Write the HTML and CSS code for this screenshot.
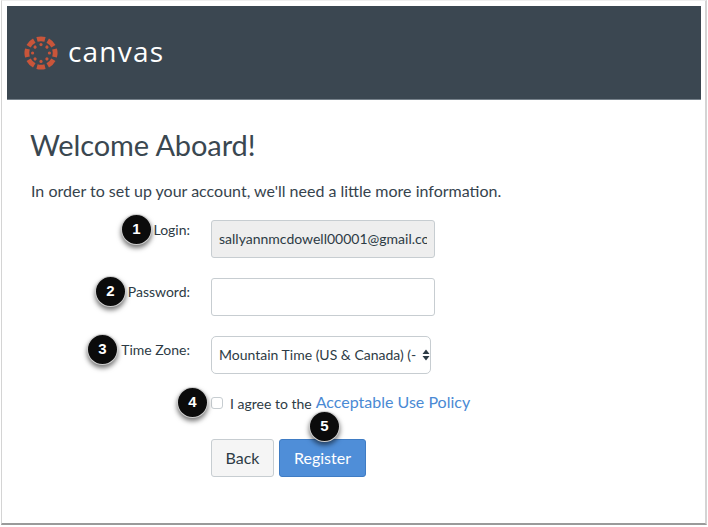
FILE: index.html
```html
<!DOCTYPE html>
<html lang="en">
<head>
    <meta charset="UTF-8">
    <title>Welcome Aboard</title>
    <link rel="stylesheet" href="styles.css">
</head>
<body>
    <div class="frame">
        <div class="header">
            <svg class="logo" viewBox="-17 -17 34 34" width="34" height="34">
                <g fill="#c9553a">
                    <g id="seg">
                        <path d="M-4.6 -15.9 A16.5 16.5 0 0 1 4.6 -15.9 L3.4 -11.2 A11.7 11.7 0 0 0 -3.4 -11.2 Z"/>
                        <circle cx="0" cy="-8.4" r="1.6"/>
                    </g>
                    <use href="#seg" transform="rotate(45)"/>
                    <use href="#seg" transform="rotate(90)"/>
                    <use href="#seg" transform="rotate(135)"/>
                    <use href="#seg" transform="rotate(180)"/>
                    <use href="#seg" transform="rotate(225)"/>
                    <use href="#seg" transform="rotate(270)"/>
                    <use href="#seg" transform="rotate(315)"/>
                </g>
            </svg>
            <div class="brand">canvas</div>
        </div>

        <div class="content">
            <h1 class="title">Welcome Aboard!</h1>
            <p class="intro">In order to set up your account, we'll need a little more information.</p>

            <div class="form">
                <div class="row row-login">
                    <div class="label"><span class="step">1</span>Login:</div>
                    <input class="field field-locked" type="text" value="sallyannmcdowell00001@gmail.com" readonly>
                </div>
                <div class="row row-password">
                    <div class="label"><span class="step">2</span>Password:</div>
                    <input class="field" type="password">
                </div>
                <div class="row row-zone">
                    <div class="label"><span class="step">3</span>Time Zone:</div>
                    <div class="select">
                        <span class="select-text">Mountain Time (US &amp; Canada) (-</span>
                        <svg class="select-arrows" viewBox="0 0 8 12" width="8" height="12">
                            <path d="M4 0.5 L7.5 5 H0.5 Z M4 11.5 L0.5 7 H7.5 Z" fill="#2d3b45"/>
                        </svg>
                    </div>
                </div>
                <div class="row row-agree">
                    <div class="label"><span class="step">4</span></div>
                    <div class="agree">
                        <span class="checkbox"></span>
                        <span class="agree-text">I agree to the</span>
                        <a class="policy" href="#">Acceptable Use Policy</a>
                    </div>
                </div>
                <div class="row row-actions">
                    <div class="label"></div>
                    <div class="actions">
                        <button class="btn btn-back">Back</button>
                        <button class="btn btn-primary">Register<span class="step step-over">5</span></button>
                    </div>
                </div>
            </div>
        </div>
    </div>
</body>
</html>
```

FILE: styles.css
```css
* { margin: 0; padding: 0; box-sizing: border-box; }
html, body { width: 708px; height: 527px; overflow: hidden; }
body {
    background: #fff;
    font-family: Lato, "Open Sans", sans-serif;
    color: #2d3b45;
    padding: 0 1px;
}
.frame {
    height: 525px;
    border: 1px solid #d4d4d4;
    border-top-color: #eeeeee;
    border-right-width: 2px;
    border-bottom: 2px solid #9a9a9a;
    padding: 5px 4px 0 5px;
}
.header {
    height: 94px;
    background: #3b4751;
    border-bottom: 1px solid #76818a;
    display: flex;
    align-items: center;
    padding: 0 0 0 17px;
}
.logo { display: block; margin-top: 1px; }
.brand {
    color: #fff;
    font-family: "Open Sans", sans-serif;
    font-size: 28px;
    font-weight: 500;
    letter-spacing: 1.2px;
    margin-left: 10px;
    margin-top: -3px;
}
.content { padding: 26px 24px 0; }
.title { font-size: 29px; font-weight: 400; line-height: 38px; letter-spacing: -0.1px; color: #3a4750; margin-left: -1px; }
.intro { font-size: 16px; line-height: 24px; margin-top: 15px; color: #36434d; }

.form { margin-top: 17px; }
.row { display: flex; align-items: flex-start; }
.row-login, .row-password, .row-zone { margin-bottom: 20px; }
.row-agree { margin-bottom: 26px; }
.label {
    width: 159px;
    padding-top: 4px;
    font-size: 14px;
    line-height: 20px;
    text-align: right;
    margin-right: 21px;
    position: relative;
}
.row-login .label { padding-top: 0; }
.field {
    width: 224px;
    height: 38px;
    border: 1px solid #c7cdd1;
    border-radius: 3px;
    padding: 0 7px 2px;
    font-family: Lato, sans-serif;
    font-size: 14px;
    color: #2d3b45;
    background: #fff;
}
.field-locked { background: #eeeeee; }
.select {
    width: 220px;
    height: 38px;
    border: 1px solid #c7cdd1;
    border-radius: 5px;
    background: #fff;
    display: flex;
    align-items: center;
    padding-left: 7px;
    font-size: 14px;
}
.select-text { white-space: nowrap; overflow: hidden; width: 202px; margin-top: -2px; }
.select-arrows { margin-left: 1px; }
.agree { display: flex; align-items: center; height: 20px; margin-top: -1px; }
.checkbox {
    width: 12px;
    height: 12px;
    border: 1px solid #c7cdd1;
    border-radius: 3px;
    background: #fff;
    margin-right: 7px;
}
.agree-text { font-size: 14px; margin-right: 4px; }
.policy { font-size: 16px; color: #4a8ad4; text-decoration: none; margin-top: -3px; }
.actions { display: flex; gap: 5px; }
.btn {
    height: 38px;
    border-radius: 3px;
    font-family: Lato, sans-serif;
    font-size: 16px;
    padding-bottom: 2px;
    position: relative;
}
.btn-back {
    width: 63px;
    background: #f5f5f5;
    border: 1px solid #c7cdd1;
    color: #2d3b45;
}
.btn-primary {
    width: 87px;
    background: #4f8ed8;
    border: 1px solid #3f7cc4;
    color: #fff;
}
.step {
    position: absolute;
    width: 31px;
    height: 31px;
    border-radius: 50%;
    background: #0b0b0b;
    border: 1px solid rgba(255, 255, 255, 0.8);
    color: #fff;
    font-family: "Liberation Sans", sans-serif;
    font-size: 15px;
    font-weight: 700;
    line-height: 28px;
    text-align: center;
    box-shadow: 0 3px 5px rgba(0, 0, 0, 0.55);
}
.row-login .step { top: -6px; left: 90px; }
.row-password .step { top: -2px; left: 64px; }
.row-zone .step { top: -2px; left: 56px; }
.row-agree .step { top: -7px; left: 146px; }
.step-over { top: -29px; left: 29px; }
```
